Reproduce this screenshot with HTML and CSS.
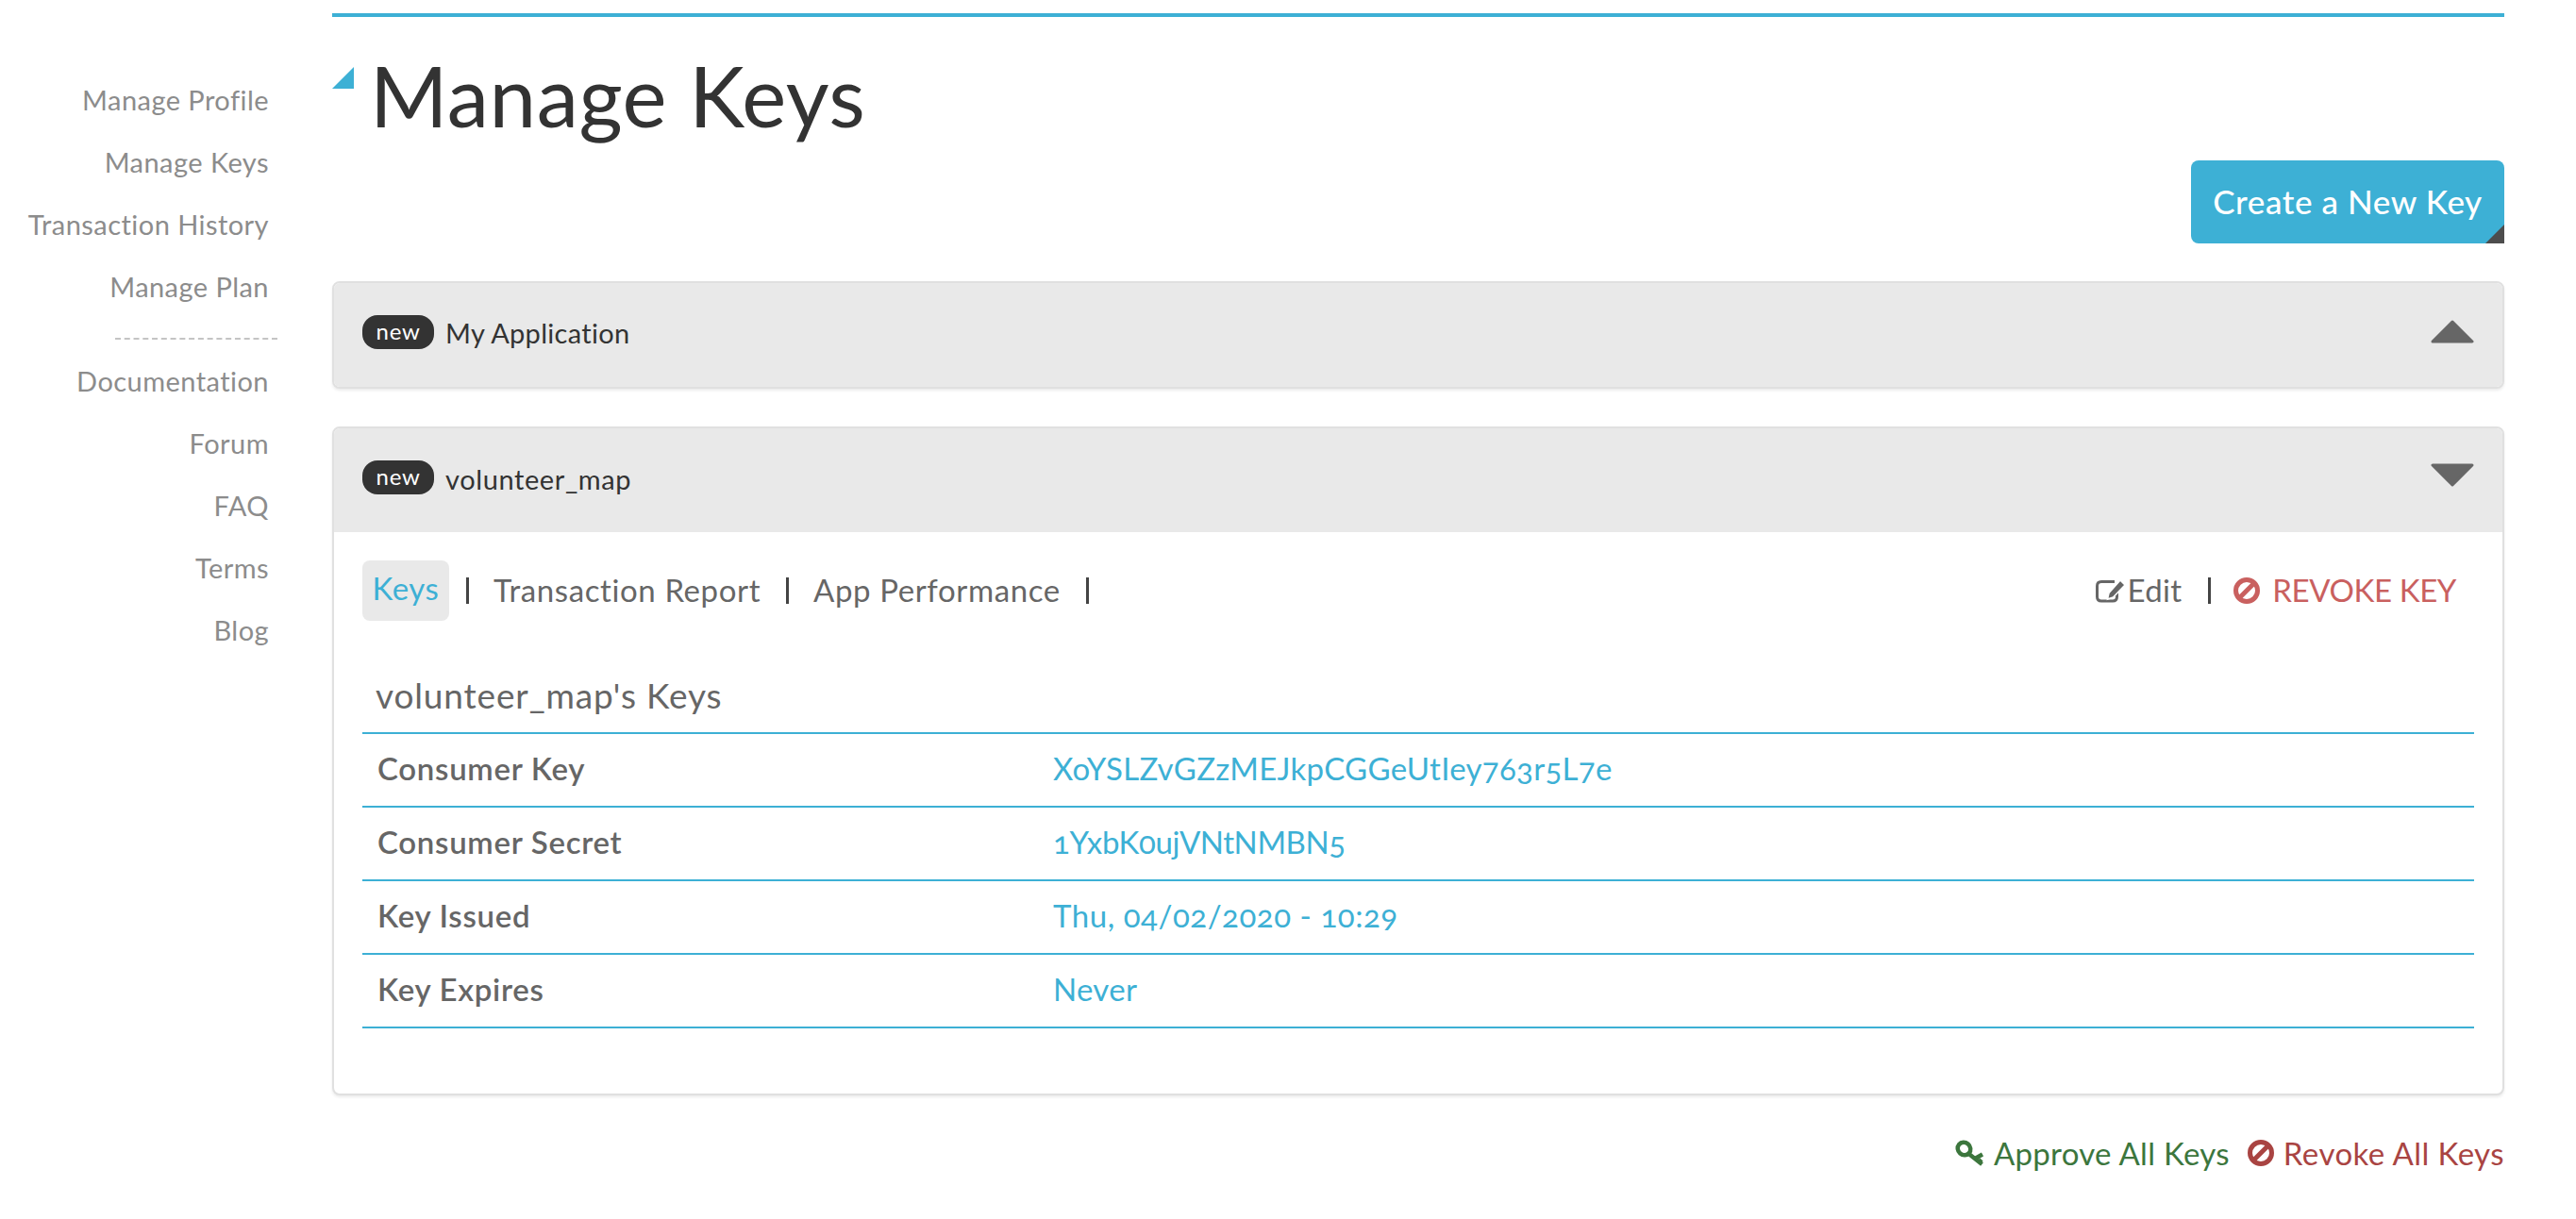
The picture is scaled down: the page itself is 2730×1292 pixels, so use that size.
FILE: index.html
```html
<!DOCTYPE html>
<html lang="en">
<head>
<meta charset="utf-8">
<title>Manage Keys</title>
<link rel="stylesheet" href="styles.css">
</head>
<body>
<div class="layout">
  <nav class="sidebar">
    <ul class="side-list">
      <li><a href="#">Manage Profile</a></li>
      <li><a href="#">Manage Keys</a></li>
      <li><a href="#">Transaction History</a></li>
      <li><a href="#">Manage Plan</a></li>
      <li class="side-divider"></li>
      <li><a href="#">Documentation</a></li>
      <li><a href="#">Forum</a></li>
      <li><a href="#">FAQ</a></li>
      <li><a href="#">Terms</a></li>
      <li><a href="#">Blog</a></li>
    </ul>
  </nav>
  <main class="main">
    <h1 class="page-title">Manage Keys</h1>
    <div class="actions"><a class="btn-create" href="#">Create a New Key</a></div>

    <section class="panel panel-closed">
      <header class="panel-head">
        <span class="badge">new</span><span class="app-name">My Application</span>
        <svg class="caret" viewBox="0 0 46 26"><path d="M23 2 44 23H2Z"/></svg>
      </header>
    </section>

    <section class="panel panel-open">
      <header class="panel-head">
        <span class="badge">new</span><span class="app-name">volunteer_map</span>
        <svg class="caret" viewBox="0 0 46 26"><path d="M2 3H44L23 24Z"/></svg>
      </header>
      <div class="panel-body">
        <div class="tabs">
          <a class="tab tab-active" href="#">Keys</a><span class="sep sep-first"></span>
          <a class="tab" href="#">Transaction Report</a><span class="sep"></span>
          <a class="tab" href="#">App Performance</a><span class="sep"></span>
          <div class="tabs-right">
            <svg class="ic-edit" viewBox="0 0 32 26"><path class="edit-box" d="M20 3.500H6Q1.500 3.500 1.500 8V19.500Q1.500 24 6 24H18Q22.500 24 22.500 19.500V15"/><path class="edit-pen" d="M26 2 31 7 18.500 20 12.500 22 14 15.500Z"/></svg>
            <a class="edit-link" href="#">Edit</a><span class="sep sep-right"></span>
            <svg class="ic-ban ic-revoke" viewBox="0 0 28 28"><circle cx="14" cy="14" r="11.500"/><path d="M6 22 22 6"/></svg>
            <a class="revoke-link" href="#">REVOKE KEY</a>
          </div>
        </div>
        <div class="keys-title">volunteer_map's Keys</div>
        <dl class="key-table">
          <div class="key-row"><dt>Consumer Key</dt><dd>XoYSLZvGZzMEJkpCGGeUtIey763r5L7e</dd></div>
          <div class="key-row"><dt>Consumer Secret</dt><dd class="dd-tight">1YxbK0ujVNtNMBN5</dd></div>
          <div class="key-row"><dt>Key Issued</dt><dd class="dd-wide">Thu, 04/02/2020 - 10:29</dd></div>
          <div class="key-row"><dt>Key Expires</dt><dd>Never</dd></div>
        </dl>
      </div>
    </section>

    <div class="bulk">
      <a class="approve" href="#"><svg class="ic-key" viewBox="0 0 30 28"><ellipse cx="9.500" cy="9.500" rx="7" ry="6.500" transform="rotate(40 9.500 9.500)"/><path d="M14 14.500 28.500 26M21 20 29 15.500M25.500 23.500 28 21"/></svg>Approve All Keys</a>
      <a class="revoke-all" href="#"><svg class="ic-ban ic-all" viewBox="0 0 28 28"><circle cx="14" cy="14" r="11.500"/><path d="M6 22 22 6"/></svg>Revoke All Keys</a>
    </div>
  </main>
</div>
</body>
</html>
```
FILE: styles.css
```css
* { box-sizing: border-box; }
html, body { margin: 0; padding: 0; background: #fff; }
body { font-family: "Lato", "Open Sans", sans-serif; font-variant-numeric: oldstyle-nums; color: #333; height: 1292px; overflow: hidden; }
a { text-decoration: none; color: inherit; }
.layout { display: flex; align-items: flex-start; }

.sidebar { width: 352px; flex: none; padding-top: 73px; }
.side-list { list-style: none; margin: 0; padding: 0; }
.side-list li { height: 66px; line-height: 66px; text-align: right; padding-right: 67px; font-size: 29px; color: #8c8c8c; letter-spacing: .45px; white-space: nowrap; }
.side-list .side-divider { height: 2px; margin: 21px 58px 11px 122px; padding: 0; border-top: 2px dashed #c4c4c4; }

.main { width: 2302px; flex: none; margin-top: 14px; border-top: 4px solid #3db0d5; }
.page-title { position: relative; margin: 0; padding: 33px 0 0 40px; height: 152px; font-size: 89px; line-height: 100px; font-weight: 400; color: #333; letter-spacing: .5px; }
.page-title::before { content: ""; position: absolute; left: 0; top: 53px; width: 23px; height: 23px; background: #3db0d5; clip-path: polygon(100% 0, 100% 100%, 0 100%); }

.actions { display: flex; justify-content: flex-end; }
.btn-create { position: relative; display: block; width: 332px; height: 88px; line-height: 86px; text-align: center; background: #3db0d5; color: #fff; font-size: 35px; font-weight: 500; border-radius: 8px 8px 0 8px; letter-spacing: .6px; overflow: hidden; }
.btn-create::after { content: ""; position: absolute; right: 0; bottom: 0; width: 20px; height: 20px; background: #4d4d4d; clip-path: polygon(100% 0, 100% 100%, 0 100%); }

.panel { border: 2px solid #e0e0e0; border-radius: 8px; box-shadow: 0 2px 3px rgba(0, 0, 0, .08); overflow: hidden; background: #fff; }
.panel-closed { margin-top: 40px; height: 114px; }
.panel-closed .panel-head { height: 110px; }
.panel-open { margin-top: 40px; height: 709px; }
.panel-open .panel-head { height: 110px; }
.panel-head { display: flex; align-items: center; padding: 0 30px 6px; background: #e9e9e9; }
.badge { width: 76px; height: 36px; line-height: 33px; border-radius: 16px; text-align: center; background: #333; color: #fff; font-size: 24px; letter-spacing: .7px; flex: none; }
.app-name { margin-left: 12px; font-size: 29px; color: #333; letter-spacing: .3px; }
.panel-open .app-name { letter-spacing: .6px; padding-top: 2px; }
.caret { margin-left: auto; width: 46px; height: 26px; fill: #666; stroke: #666; stroke-width: 3; stroke-linejoin: round; }
.panel-open .caret { transform: translateY(-3px); }

.panel-body { padding: 30px 30px 0; }
.tabs { display: flex; align-items: center; height: 64px; font-size: 33px; color: #666; }
.tab { letter-spacing: .6px; white-space: nowrap; line-height: 60px; padding-bottom: 3px; }
.tab-active { width: 92px; height: 64px; padding-bottom: 0; line-height: 58px; text-align: center; border-radius: 8px; background: #e9e9e9; color: #3db0d5; }
.sep { width: 3px; height: 28px; background: #444; flex: none; margin: 0 26px 0 27px; }
.tabs .sep-first { margin-left: 18px; }
.tabs-right { margin-left: auto; display: flex; align-items: center; padding-right: 19px; line-height: 60px; }
.ic-edit { width: 32px; height: 26px; margin-right: 1px; }
.edit-box { fill: none; stroke: #666; stroke-width: 3; }
.edit-pen { fill: #666; stroke: #fff; stroke-width: 1.500; }
.edit-link { letter-spacing: .3px; padding-bottom: 3px; }
.tabs .sep-right { margin: 0 24px 0 28px; }
.ic-ban { fill: none; stroke-width: 5; flex: none; }
.ic-revoke { width: 28px; height: 28px; stroke: #c9605f; margin-right: 13px; }
.revoke-link { color: #c9605f; letter-spacing: -.4px; padding-bottom: 3px; }

.keys-title { height: 74px; margin-top: 44px; padding-left: 14px; line-height: 70px; font-size: 37px; color: #666; letter-spacing: .85px; }
.key-table { margin: 0; border-top: 2px solid #3db0d5; }
.key-row { display: flex; align-items: center; height: 78px; padding-bottom: 4px; border-bottom: 2px solid #3db0d5; font-size: 33px; }
.key-row dt { width: 732px; padding-left: 16px; font-weight: 600; color: #666; letter-spacing: .7px; }
.key-row dd { margin: 0; color: #3db0d5; letter-spacing: .3px; }
.key-row .dd-tight { letter-spacing: -.4px; }
.key-row .dd-wide { letter-spacing: .55px; }

.bulk { display: flex; justify-content: flex-end; align-items: center; gap: 19px; margin-top: 41px; font-size: 33px; letter-spacing: .45px; }
.bulk a { display: flex; align-items: center; white-space: nowrap; }
.approve { color: #3c763d; letter-spacing: .3px; }
.revoke-all { color: #a94442; }
.ic-key { width: 30px; height: 28px; margin-right: 11px; fill: none; stroke: #3c763d; stroke-width: 4.500; }
.ic-all { width: 28px; height: 28px; stroke: #a94442; margin-right: 10px; }
```
